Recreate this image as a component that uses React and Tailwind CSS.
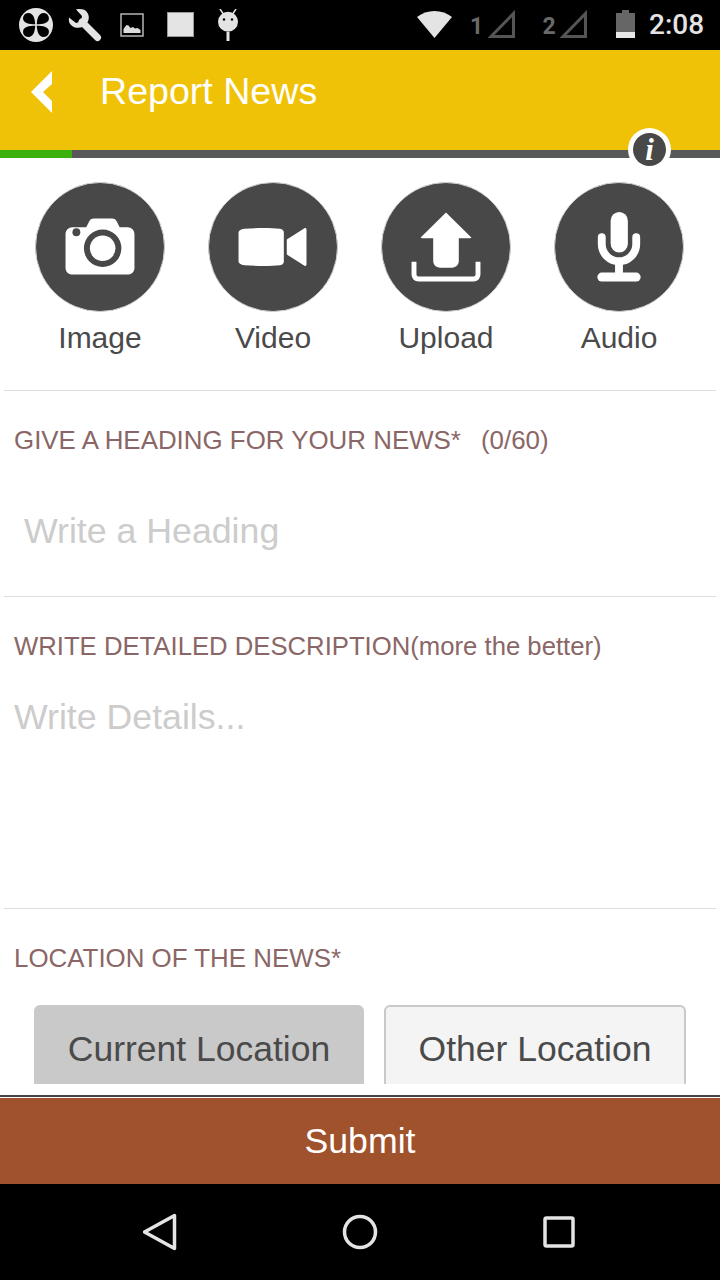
import React from "react";

const Divider = () => <div className="mx-1 h-px bg-[#dedede]" />;

const Tile = ({ label, children }) => (
  <div className="flex w-[173px] flex-col items-center">
    <div className="flex h-[130px] w-[130px] items-center justify-center rounded-full border border-[#cfcfcf] bg-[#484848]">
      <svg viewBox="0 0 130 130" className="h-[130px] w-[130px]" fill="#fff">{children}</svg>
    </div>
    <div className="mt-[9px] text-[30px] leading-[34px] text-[#4a4a4a]">{label}</div>
  </div>
);

export default function App() {
  return (
    <div className="flex h-[1280px] w-[720px] flex-col overflow-hidden bg-white font-['Liberation_Sans',Arial,sans-serif]">
      {/* status bar */}
      <div className="flex h-[50px] shrink-0 items-center justify-between bg-black pl-[18px] pr-[17px]">
        <div className="flex items-center">
          <svg width="36" height="36" viewBox="0 0 36 36">
            <circle cx="18" cy="18" r="17" fill="#e4e4e4" />
            <path d="M17.200 17.200C17 11 15 6 10.500 6 6.500 6 4.500 9.500 5.200 12.500 6 16 11 17.200 17.200 17.200zM18.800 17.200C19 11 21 6 25.500 6 29.500 6 31.500 9.500 30.800 12.500 30 16 25 17.200 18.800 17.200zM17.200 18.800C17 25 15 30 10.500 30 6.500 30 4.500 26.500 5.200 23.500 6 20 11 18.800 17.200 18.800zM18.800 18.800C19 25 21 30 25.500 30 29.500 30 31.500 26.500 30.800 23.500 30 20 25 18.800 18.800 18.800z" fill="#000" />
          </svg>
          <svg width="34" height="34" viewBox="0 0 34 34" className="ml-3.5">
            <path d="M8 1.500C12 .5 16 1 18.500 3.500 21 6 21.500 10 20 13.500L14.500 19C10.500 20.500 6 20 3 17 1 15 .5 12.500 1 9.500L8 15l5-1.500L14 8z" fill="#e4e4e4" />
            <path d="M14 14l15.500 15.500" stroke="#e4e4e4" strokeWidth="7" strokeLinecap="round" />
          </svg>
          <svg width="24" height="24" viewBox="0 0 24 24" className="ml-[18px]">
            <rect x="1" y="1" width="22" height="22" fill="none" stroke="#b5b5b5" strokeWidth="1.500" />
            <path d="M3.500 20v-4l3-4 2 .5 2 2.500 2.500-1 2 1.500 2.500-.5 3 2V20z" fill="#dcdcdc" />
          </svg>
          <div className="ml-[23px] -mt-px h-[25px] w-[27px] border border-[#999] bg-[#e4e4e4]" />
          <svg width="24" height="32" viewBox="0 0 24 32" className="ml-[22px]">
            <path d="M4 0l4 6M20 0l-4 6" stroke="#e4e4e4" strokeWidth="1.500" />
            <circle cx="12" cy="12.700" r="10" fill="#e4e4e4" />
            <circle cx="8" cy="10.500" r="1.200" fill="#000" />
            <circle cx="16" cy="10.500" r="1.200" fill="#000" />
            <rect x="10.500" y="23" width="3" height="9" fill="#e4e4e4" />
          </svg>
        </div>
        <div className="flex items-center">
          <svg width="35" height="27" viewBox="0 0 35 27" className="-mt-px">
            <path d="M0 6C5 2 11 0 17.500 0S30 2 35 6L17.500 27z" fill="#e4e4e4" />
          </svg>
          <span className="ml-[18px] mt-0.5 w-3 text-center font-['Roboto',sans-serif] text-[23px] font-bold leading-none text-[#6a6a6a]">1</span>
          <svg width="28" height="28" viewBox="0 0 28 28" className="ml-1.5 -mt-0.5">
            <path d="M25.500 3.500v23H3z" fill="none" stroke="#555" strokeWidth="3" />
          </svg>
          <span className="ml-[26px] mt-0.5 w-3.5 text-center font-['Roboto',sans-serif] text-[23px] font-bold leading-none text-[#6a6a6a]">2</span>
          <svg width="28" height="28" viewBox="0 0 28 28" className="ml-1 -mt-0.5">
            <path d="M25.500 3.500v23H3z" fill="none" stroke="#555" strokeWidth="3" />
          </svg>
          <svg width="19" height="28" viewBox="0 0 19 28" className="ml-7 -mt-0.5">
            <path d="M6 0h7v3h6v25H0V3h6z" fill="#666" />
            <rect y="22" width="19" height="6" fill="#e8e8e8" />
          </svg>
          <span className="ml-3.5 w-[54px] font-['Roboto',sans-serif] text-[28px] font-medium leading-none text-[#e4e4e4]">2:08</span>
        </div>
      </div>

      {/* header */}
      <div className="relative shrink-0">
        <div className="flex h-[100px] items-start bg-[#efc207] pl-[31px] pt-[21px]">
          <svg width="22" height="42" viewBox="0 0 22 42">
            <path d="M21 0v13L12 21l9 9v12L0 21z" fill="#fff" />
          </svg>
          <span className="ml-[47px] -mt-px text-[37.6px] leading-[42px] text-white">Report News</span>
        </div>
        <div className="flex h-2 bg-[#58585a]">
          <div className="w-[72px] bg-[#3cb00c]" />
        </div>
        <div className="absolute left-[628px] top-[78px] flex h-[43px] w-[43px] items-center justify-center rounded-full bg-white">
          <div className="flex h-[33px] w-[33px] items-center justify-center rounded-full bg-[#484848] font-['Liberation_Serif',serif] text-[31px] font-bold italic leading-none text-white">i</div>
        </div>
      </div>

      {/* scroll area */}
      <div className="h-[926px] shrink-0 overflow-hidden">
        <div className="flex h-[232px] px-[13.5px] pt-6">
          <Tile label="Image">
            <path d="M37 45h14l3-6c1-2 2-3 5-3h18c3 0 4 1 5 3l3 6h8c4 0 7 3 7 7v34c0 4-3 7-7 7H37c-4 0-7-3-7-7V52c0-4 3-7 7-7z" />
            <circle cx="67.700" cy="66.300" r="19" fill="#484848" />
            <circle cx="67.700" cy="66.300" r="13" />
            <circle cx="41" cy="50" r="4" fill="#484848" />
          </Tile>
          <Tile label="Video">
            <path d="M36 46.500c13-1 27-1 36 0 3 .5 4 2 4 4v29c0 2-1 3.500-4 4-9 1-23 1-36 0-4-.5-6-2-6-4v-29c0-2 2-3.500 6-4z" />
            <path d="M99 47.500v35c0 1.500-1 2-2 1.500L79 72.500v-15L97 46c1-.5 2 0 2 1.500z" />
          </Tile>
          <Tile label="Upload">
            <path d="M65 30l25.500 25c.5.5 0 1-1 1H78v23c0 4-3 7-7 7H59c-4 0-7-3-7-7V56H40.500c-1 0-1.500-.5-1-1z" />
            <path d="M32.500 80v13c0 3 2 4.500 4.500 4.500h56c2.500 0 4.500-1.500 4.500-4.500V80" fill="none" stroke="#fff" strokeWidth="5" />
          </Tile>
          <Tile label="Audio">
            <rect x="56.500" y="29.500" width="17.500" height="41" rx="8.750" />
            <path d="M47.500 55v7a17.500 17.500 0 0 0 35 0v-7" fill="none" stroke="#fff" strokeWidth="8" strokeLinecap="round" />
            <rect x="61" y="82" width="8" height="12" />
            <rect x="43" y="91" width="44" height="9" rx="4.500" />
          </Tile>
        </div>
        <Divider />

        <div className="h-[205px] px-3.5 pt-[33px]">
          <div className="whitespace-pre text-[25.9px] leading-[32px] text-[#8a6666]">
            <span>GIVE A HEADING FOR YOUR NEWS*</span>
            <span className="ml-5">(0/60)</span>
          </div>
          <div className="ml-2.5 mt-[53px] text-[35.7px] leading-[44px] text-[#cccccc]">Write a Heading</div>
        </div>
        <Divider />

        <div className="h-[311px] px-3.5 pt-[33px]">
          <div className="text-[25.7px] leading-[32px] text-[#8a6666]">WRITE DETAILED DESCRIPTION(more the better)</div>
          <div className="mt-[34px] text-[35.7px] leading-[42px] text-[#cccccc]">Write Details...</div>
        </div>
        <Divider />

        <div className="px-3.5 pt-[33px]">
          <div className="text-[25.9px] leading-[32px] text-[#8a6666]">LOCATION OF THE NEWS*</div>
          <div className="ml-5 mt-[31px] flex gap-5">
            <div className="h-[90px] w-[330px] rounded-t-md border-2 border-[#c9c9c9] bg-[#c9c9c9] pt-[21px] text-center text-[35.5px] leading-[42px] text-[#4a4a4a]">Current Location</div>
            <div className="h-[90px] w-[302px] rounded-t-md border-2 border-[#c9c9c9] bg-[#f4f4f4] pt-[21px] text-center text-[35.5px] leading-[42px] text-[#4a4a4a]">Other Location</div>
          </div>
        </div>
      </div>

      {/* submit */}
      <div className="mt-[11px] h-0.5 shrink-0 bg-[#444]" />
      <div className="mt-px flex h-[86px] shrink-0 items-center justify-center bg-[#a0522d] pt-px text-[35.7px] text-white">Submit</div>

      {/* nav bar */}
      <div className="flex h-[96px] shrink-0 items-center justify-center bg-black">
        <div className="mr-0.5 flex items-center gap-[165px]">
          <svg width="34" height="38" viewBox="0 0 34 38">
            <path d="M31.500 2.500v33L1.500 19z" fill="none" stroke="#e4e4e4" strokeWidth="3.500" strokeLinejoin="round" />
          </svg>
          <svg width="36" height="36" viewBox="0 0 36 36">
            <circle cx="18" cy="18" r="15.500" fill="none" stroke="#e4e4e4" strokeWidth="3.500" />
          </svg>
          <svg width="32" height="32" viewBox="0 0 32 32">
            <rect x="2" y="2" width="28" height="28" rx="1.500" fill="none" stroke="#e4e4e4" strokeWidth="3.500" />
          </svg>
        </div>
      </div>
    </div>
  );
}
